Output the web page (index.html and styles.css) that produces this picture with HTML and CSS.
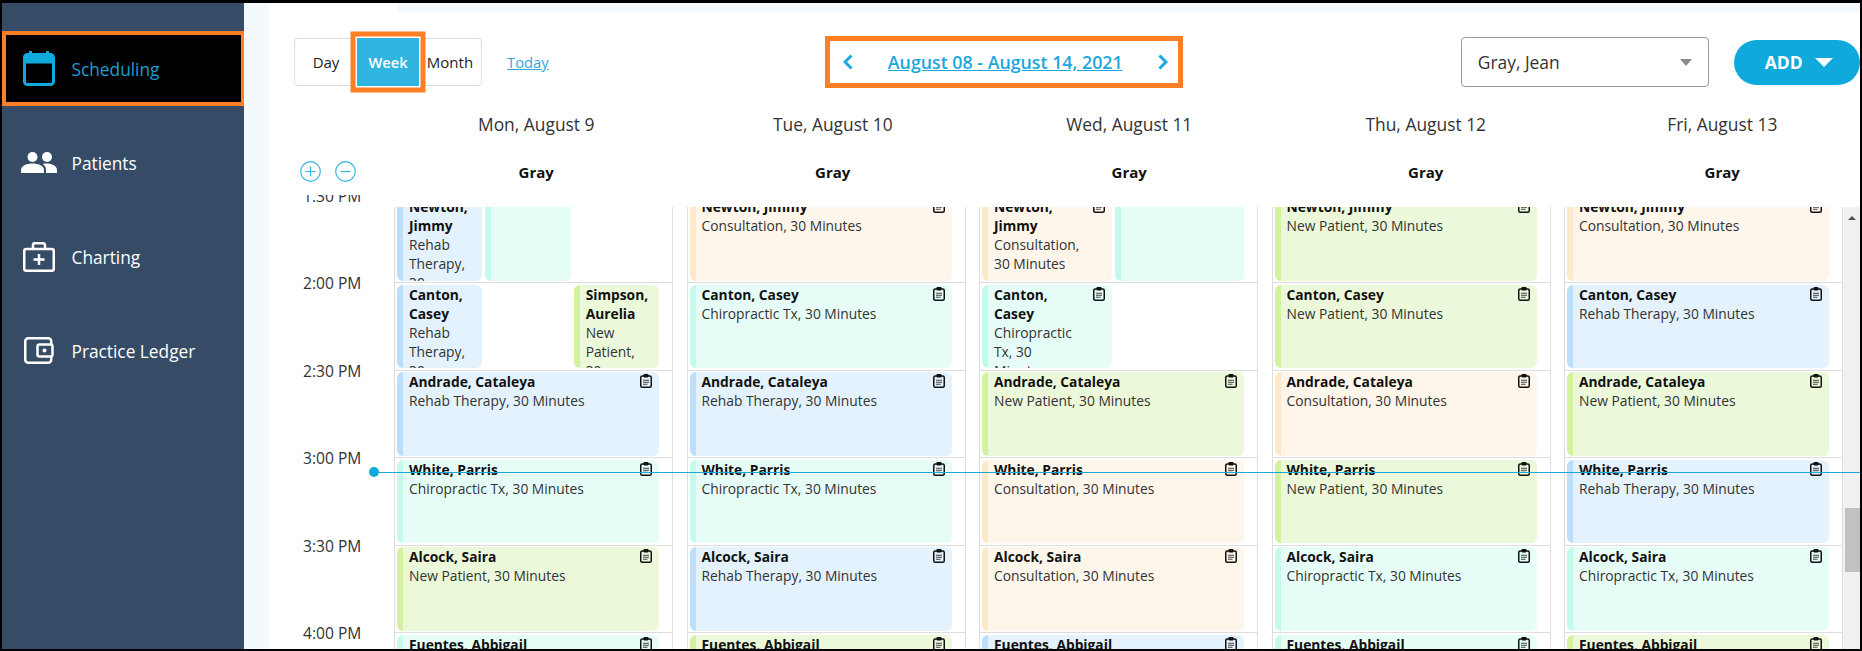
FILE: index.html
```html
<!DOCTYPE html>
<html lang="en">
<head>
    <meta charset="UTF-8">
    <meta name="viewport" content="width=device-width, initial-scale=1.0">
    <title>Scheduling</title>
    <link rel="stylesheet" href="styles.css">
</head>
<body>
    <svg class="sprites" width="0" height="0">
        <symbol id="clip" viewBox="0 0 12 14">
            <rect x="0.75" y="2" width="10.5" height="11.25" rx="1.5" fill="none" stroke="#111" stroke-width="1.5"/>
            <rect x="3.5" y="0" width="5" height="3.5" rx="0.8" fill="#111"/>
            <path d="M3 6.2h6M3 8.2h6M3 10.2h4.5" stroke="#444" stroke-width="1.1"/>
        </symbol>
    </svg>

    <div class="app">
        <nav class="sidebar">
            <a class="nav-item active">
                <svg class="nav-icon" width="32" height="35" viewBox="0 0 32 35">
                    <rect x="1.5" y="3.5" width="29" height="30" rx="3" fill="none" stroke="#0fa9dc" stroke-width="3"/>
                    <rect x="1.5" y="3.5" width="29" height="9" fill="#0fa9dc"/>
                    <rect x="6" y="0" width="3" height="5" fill="#0fa9dc"/>
                    <rect x="23" y="0" width="3" height="5" fill="#0fa9dc"/>
                </svg>
                <span>Scheduling</span>
            </a>
            <a class="nav-item">
                <svg class="nav-icon" width="36" height="21" viewBox="0 0 36 21" fill="#fff">
                    <circle cx="11.5" cy="5" r="5"/>
                    <circle cx="26" cy="5" r="5"/>
                    <path d="M0 21v-3c0-4.500 6.500-6.500 11.500-6.500S23 13.500 23 18v3z"/>
                    <path d="M25 21v-3c0-2.600-1.200-4.600-3.200-6 1.300-.3 2.900-.4 4.200-.4 4.600 0 10 2.300 10 6.400v3z"/>
                </svg>
                <span>Patients</span>
            </a>
            <a class="nav-item">
                <svg class="nav-icon" width="32" height="30" viewBox="0 0 32 30" fill="none" stroke="#fff" stroke-width="2.500">
                    <rect x="1.250" y="7" width="29.500" height="21.750" rx="2"/>
                    <path d="M10 7V3.200a2 2 0 0 1 2-2h8a2 2 0 0 1 2 2V7"/>
                    <path d="M16 12v11M10.500 17.500h11"/>
                </svg>
                <span>Charting</span>
            </a>
            <a class="nav-item">
                <svg class="nav-icon" width="30" height="27" viewBox="0 0 30 27" fill="none" stroke="#fff" stroke-width="2.500">
                    <rect x="1.250" y="1.250" width="26" height="24.500" rx="3"/>
                    <rect x="13.500" y="7.500" width="15" height="12" rx="2" fill="#364c66"/>
                    <circle cx="20.500" cy="13.500" r="2" fill="#fff" stroke="none"/>
                </svg>
                <span>Practice Ledger</span>
            </a>
        </nav>

        <main class="main">
            <div class="content">
                <div class="top-strip"></div>

                <div class="toolbar">
                    <div class="view-group">
                        <a class="view-btn">Day</a>
                        <a class="view-btn selected">Week</a>
                        <a class="view-btn">Month</a>
                    </div>
                    <a class="today-link">Today</a>
                    <div class="date-nav">
                        <svg width="10" height="16" viewBox="0 0 10 16"><path d="M8.500 1.500L2 8l6.500 6.500" fill="none" stroke="#1ba8dc" stroke-width="3"/></svg>
                        <a class="date-range">August 08 - August 14, 2021</a>
                        <svg width="10" height="16" viewBox="0 0 10 16"><path d="M1.500 1.500L8 8l-6.500 6.500" fill="none" stroke="#1ba8dc" stroke-width="3"/></svg>
                    </div>
                    <div class="provider-select">
                        <span>Gray, Jean</span>
                        <span class="caret"></span>
                    </div>
                    <div class="add-btn">
                        <span>ADD</span>
                        <span class="add-caret"></span>
                    </div>
                </div>

                <div class="head-grid day-row">
                    <div></div>
                    <div>Mon, August 9</div>
                    <div>Tue, August 10</div>
                    <div>Wed, August 11</div>
                    <div>Thu, August 12</div>
                    <div>Fri, August 13</div>
                </div>
                <div class="head-grid provider-row">
                    <div class="zoom-btns">
                        <svg width="21" height="21" viewBox="0 0 21 21" fill="none" stroke="#2fb5e0" stroke-width="1.200">
                            <circle cx="10.500" cy="10.500" r="9.800"/>
                            <path d="M10.500 5.500v10M5.500 10.500h10"/>
                        </svg>
                        <svg width="21" height="21" viewBox="0 0 21 21" fill="none" stroke="#2fb5e0" stroke-width="1.200">
                            <circle cx="10.500" cy="10.500" r="9.800"/>
                            <path d="M5.500 10.500h10"/>
                        </svg>
                    </div>
                    <div>Gray</div>
                    <div>Gray</div>
                    <div>Gray</div>
                    <div>Gray</div>
                    <div>Gray</div>
                </div>

                <div class="calendar">
                    <div class="time-axis">
                        <div class="time-list">
                            <div class="time">1:30 PM</div>
                            <div class="time">2:00 PM</div>
                            <div class="time">2:30 PM</div>
                            <div class="time">3:00 PM</div>
                            <div class="time">3:30 PM</div>
                            <div class="time">4:00 PM</div>
                        </div>
                    </div>

                    <div class="days">
                        <div class="days-inner">
                            <!-- Monday -->
                            <div class="day">
                                <div class="slot">
                                    <div class="event blue"><b>Newton, Jimmy</b>Rehab Therapy, 30 Minutes</div>
                                    <div class="event teal"></div>
                                    <div class="spacer"></div>
                                </div>
                                <div class="slot">
                                    <div class="event blue"><b>Canton, Casey</b>Rehab Therapy, 30 Minutes</div>
                                    <div class="spacer"></div>
                                    <div class="event green"><b>Simpson, Aurelia</b>New Patient, 30 Minutes</div>
                                </div>
                                <div class="slot">
                                    <div class="event blue"><svg class="clip"><use href="#clip"/></svg><b>Andrade, Cataleya</b>Rehab Therapy, 30 Minutes</div>
                                </div>
                                <div class="slot">
                                    <div class="event teal"><svg class="clip"><use href="#clip"/></svg><b>White, Parris</b>Chiropractic Tx, 30 Minutes</div>
                                </div>
                                <div class="slot">
                                    <div class="event green"><svg class="clip"><use href="#clip"/></svg><b>Alcock, Saira</b>New Patient, 30 Minutes</div>
                                </div>
                                <div class="slot">
                                    <div class="event teal"><svg class="clip"><use href="#clip"/></svg><b>Fuentes, Abbigail</b>Chiropractic Tx, 30 Minutes</div>
                                </div>
                            </div>
                            <!-- Tuesday -->
                            <div class="day">
                                <div class="slot">
                                    <div class="event orange"><svg class="clip"><use href="#clip"/></svg><b>Newton, Jimmy</b>Consultation, 30 Minutes</div>
                                </div>
                                <div class="slot">
                                    <div class="event teal"><svg class="clip"><use href="#clip"/></svg><b>Canton, Casey</b>Chiropractic Tx, 30 Minutes</div>
                                </div>
                                <div class="slot">
                                    <div class="event blue"><svg class="clip"><use href="#clip"/></svg><b>Andrade, Cataleya</b>Rehab Therapy, 30 Minutes</div>
                                </div>
                                <div class="slot">
                                    <div class="event teal"><svg class="clip"><use href="#clip"/></svg><b>White, Parris</b>Chiropractic Tx, 30 Minutes</div>
                                </div>
                                <div class="slot">
                                    <div class="event blue"><svg class="clip"><use href="#clip"/></svg><b>Alcock, Saira</b>Rehab Therapy, 30 Minutes</div>
                                </div>
                                <div class="slot">
                                    <div class="event green"><svg class="clip"><use href="#clip"/></svg><b>Fuentes, Abbigail</b>New Patient, 30 Minutes</div>
                                </div>
                            </div>
                            <!-- Wednesday -->
                            <div class="day">
                                <div class="slot">
                                    <div class="event orange"><svg class="clip"><use href="#clip"/></svg><b>Newton, Jimmy</b>Consultation, 30 Minutes</div>
                                    <div class="event teal"></div>
                                </div>
                                <div class="slot">
                                    <div class="event teal"><svg class="clip"><use href="#clip"/></svg><b>Canton, Casey</b>Chiropractic Tx, 30 Minutes</div>
                                    <div class="spacer"></div>
                                </div>
                                <div class="slot">
                                    <div class="event green"><svg class="clip"><use href="#clip"/></svg><b>Andrade, Cataleya</b>New Patient, 30 Minutes</div>
                                </div>
                                <div class="slot">
                                    <div class="event orange"><svg class="clip"><use href="#clip"/></svg><b>White, Parris</b>Consultation, 30 Minutes</div>
                                </div>
                                <div class="slot">
                                    <div class="event orange"><svg class="clip"><use href="#clip"/></svg><b>Alcock, Saira</b>Consultation, 30 Minutes</div>
                                </div>
                                <div class="slot">
                                    <div class="event blue"><svg class="clip"><use href="#clip"/></svg><b>Fuentes, Abbigail</b>Rehab Therapy, 30 Minutes</div>
                                </div>
                            </div>
                            <!-- Thursday -->
                            <div class="day">
                                <div class="slot">
                                    <div class="event green"><svg class="clip"><use href="#clip"/></svg><b>Newton, Jimmy</b>New Patient, 30 Minutes</div>
                                </div>
                                <div class="slot">
                                    <div class="event green"><svg class="clip"><use href="#clip"/></svg><b>Canton, Casey</b>New Patient, 30 Minutes</div>
                                </div>
                                <div class="slot">
                                    <div class="event orange"><svg class="clip"><use href="#clip"/></svg><b>Andrade, Cataleya</b>Consultation, 30 Minutes</div>
                                </div>
                                <div class="slot">
                                    <div class="event green"><svg class="clip"><use href="#clip"/></svg><b>White, Parris</b>New Patient, 30 Minutes</div>
                                </div>
                                <div class="slot">
                                    <div class="event teal"><svg class="clip"><use href="#clip"/></svg><b>Alcock, Saira</b>Chiropractic Tx, 30 Minutes</div>
                                </div>
                                <div class="slot">
                                    <div class="event teal"><svg class="clip"><use href="#clip"/></svg><b>Fuentes, Abbigail</b>Chiropractic Tx, 30 Minutes</div>
                                </div>
                            </div>
                            <!-- Friday -->
                            <div class="day">
                                <div class="slot">
                                    <div class="event orange"><svg class="clip"><use href="#clip"/></svg><b>Newton, Jimmy</b>Consultation, 30 Minutes</div>
                                </div>
                                <div class="slot">
                                    <div class="event blue"><svg class="clip"><use href="#clip"/></svg><b>Canton, Casey</b>Rehab Therapy, 30 Minutes</div>
                                </div>
                                <div class="slot">
                                    <div class="event green"><svg class="clip"><use href="#clip"/></svg><b>Andrade, Cataleya</b>New Patient, 30 Minutes</div>
                                </div>
                                <div class="slot">
                                    <div class="event blue"><svg class="clip"><use href="#clip"/></svg><b>White, Parris</b>Rehab Therapy, 30 Minutes</div>
                                </div>
                                <div class="slot">
                                    <div class="event teal"><svg class="clip"><use href="#clip"/></svg><b>Alcock, Saira</b>Chiropractic Tx, 30 Minutes</div>
                                </div>
                                <div class="slot">
                                    <div class="event green"><svg class="clip"><use href="#clip"/></svg><b>Fuentes, Abbigail</b>New Patient, 30 Minutes</div>
                                </div>
                            </div>
                        </div>
                    </div>

                    <div class="scrollbar">
                        <div class="scroll-arrow"></div>
                        <div class="scroll-thumb"></div>
                    </div>

                    <div class="now-line"></div>
                </div>
            </div>
        </main>
    </div>
</body>
</html>
```

FILE: styles.css
```css
body {
    font-family: "Open Sans", "Liberation Sans", sans-serif;
    margin: 0;
    color: #333;
    overflow: hidden;
}

.sprites {
    position: absolute;
}

.app {
    display: flex;
    box-sizing: border-box;
    width: 1862px;
    height: 651px;
    border-style: solid;
    border-color: #000;
    border-width: 3px 2px 2px 2px;
}

/* sidebar */
.sidebar {
    flex: 0 0 242px;
    display: flex;
    flex-direction: column;
    gap: 19px;
    box-sizing: border-box;
    padding-top: 28px;
    background-color: #364c66;
}

.nav-item {
    display: flex;
    align-items: center;
    box-sizing: border-box;
    height: 75px;
    border: 4px solid transparent;
    border-right-width: 3px;
    color: #fff;
    font-size: 17.300px;
}

.nav-item.active {
    background-color: #000;
    border-color: #ff7f27;
    color: #1a9fd0;
}

.nav-icon {
    flex: none;
    margin-left: auto;
    margin-right: auto;
}

.nav-item span {
    flex: 0 0 169.500px;
    padding-top: 1px;
}

/* main area */
.main {
    flex: 1;
    min-width: 0;
    padding-left: 25px;
    background-color: #f4f9fd;
}

.content {
    display: flex;
    flex-direction: column;
    height: 100%;
    overflow: hidden;
    background-color: #fff;
}

.top-strip {
    flex: 0 0 9px;
    margin-left: 129px;
    background-color: #f4f9fd;
}

.toolbar {
    flex: 0 0 100px;
    display: flex;
    align-items: center;
    padding-left: 25px;
}

.view-group {
    display: flex;
    box-sizing: border-box;
    width: 188px;
    height: 48px;
    border: 1px solid #ddd;
    border-radius: 4px;
}

.view-btn {
    flex: 1;
    display: flex;
    align-items: center;
    justify-content: center;
    font-size: 15px;
    color: #222;
}

.view-btn.selected {
    flex: 0 0 62px;
    margin: -1px 0;
    background-color: #2fb5e0;
    color: #fff;
    font-size: 14.700px;
    font-weight: 600;
    box-shadow: 0 0 0 1.500px #fff, 0 0 0 6.500px #ff7f27;
}

.today-link {
    margin-left: 25px;
    font-size: 14.800px;
    color: #2fa8dc;
    text-decoration: underline;
}

.date-nav {
    display: flex;
    align-items: center;
    justify-content: space-between;
    box-sizing: border-box;
    width: 358px;
    height: 52px;
    margin-left: 276px;
    padding: 0 10px 0 13px;
    border: 5px solid #ff7f27;
}

.date-range {
    font-size: 17.800px;
    font-weight: 600;
    color: #1ba8dc;
    text-decoration: underline;
    white-space: nowrap;
}

.provider-select {
    display: flex;
    align-items: center;
    justify-content: space-between;
    box-sizing: border-box;
    width: 248px;
    height: 50px;
    margin-left: 278px;
    padding: 0 16px;
    border: 1px solid #999;
    border-radius: 4px;
    font-size: 17.400px;
}

.caret {
    border-left: 6px solid transparent;
    border-right: 6px solid transparent;
    border-top: 7px solid #8a8a8a;
}

.add-btn {
    display: flex;
    align-items: center;
    gap: 12px;
    box-sizing: border-box;
    flex: 0 0 126px;
    height: 45px;
    margin-left: 25px;
    padding-left: 31px;
    border-radius: 23px;
    background-color: #0fa9dc;
    color: #fff;
    font-size: 17.500px;
    font-weight: 700;
}

.add-caret {
    border-left: 9px solid transparent;
    border-right: 9px solid transparent;
    border-top: 9px solid #fff;
}

.head-grid {
    display: grid;
    grid-template-columns: 119px repeat(5, 296.5px);
    text-align: center;
}

.day-row {
    flex: 0 0 24px;
    align-items: center;
    font-size: 17.400px;
}

.provider-row {
    flex: 0 0 71px;
    align-items: center;
    font-size: 15px;
    font-weight: 700;
    color: #111;
}

.zoom-btns {
    display: flex;
    gap: 14px;
    padding-left: 31px;
}

/* calendar */
.calendar {
    flex: 1;
    min-height: 0;
    display: flex;
    position: relative;
}

.time-axis {
    flex: 0 0 125px;
    margin-top: -12px;
    overflow: hidden;
}

.time-list {
    margin-top: -11.500px;
}

.time {
    height: 87.500px;
    padding-left: 34px;
    font-size: 15.600px;
    line-height: 24px;
}

.days {
    flex: 1;
    min-width: 0;
    overflow: hidden;
}

.days-inner {
    display: grid;
    grid-template-columns: repeat(5, 279px);
    column-gap: 13.500px;
    margin-top: -11.500px;
}

.day {
    border-left: 1px solid #ddd;
    border-right: 1px solid #ddd;
}

.slot {
    display: grid;
    grid-auto-flow: column;
    grid-auto-columns: minmax(0, 1fr);
    gap: 3px;
    box-sizing: border-box;
    height: 87.500px;
    padding: 1.500px 13px 1.500px 2px;
    border-bottom: 1px solid #ddd;
}

.event {
    position: relative;
    box-sizing: border-box;
    padding: 0 30px 0 6px;
    border-left: 6px solid;
    border-radius: 6px;
    overflow: hidden;
    font-size: 13.800px;
    line-height: 19px;
}

.event b {
    display: block;
    color: #111;
}

.blue {
    background-color: #e3f2fd;
    border-left-color: #bbdefb;
}

.teal {
    background-color: #e6fdf7;
    border-left-color: #c4faec;
}

.green {
    background-color: #ecf8da;
    border-left-color: #d2f2a0;
}

.orange {
    background-color: #fef6ea;
    border-left-color: #fde8c8;
}

.clip {
    position: absolute;
    top: 2px;
    right: 7px;
    width: 12px;
    height: 14px;
}

.scrollbar {
    flex: 0 0 17px;
    box-sizing: border-box;
    padding: 9px 0 0 2px;
    background-color: #f1f1f1;
}

.scroll-arrow {
    width: 0;
    margin-left: 3px;
    border-left: 4px solid transparent;
    border-right: 4px solid transparent;
    border-bottom: 4px solid #505050;
}

.scroll-thumb {
    height: 64px;
    margin-top: 288px;
    background-color: #c1c1c1;
}

.now-line {
    position: absolute;
    top: 265px;
    left: 105px;
    right: 0;
    height: 1px;
    background-color: #1fa6d8;
}

.now-line::before {
    content: "";
    position: absolute;
    top: -5px;
    left: -5px;
    width: 10px;
    height: 10px;
    border-radius: 50%;
    background-color: #0fa9dc;
}
```
